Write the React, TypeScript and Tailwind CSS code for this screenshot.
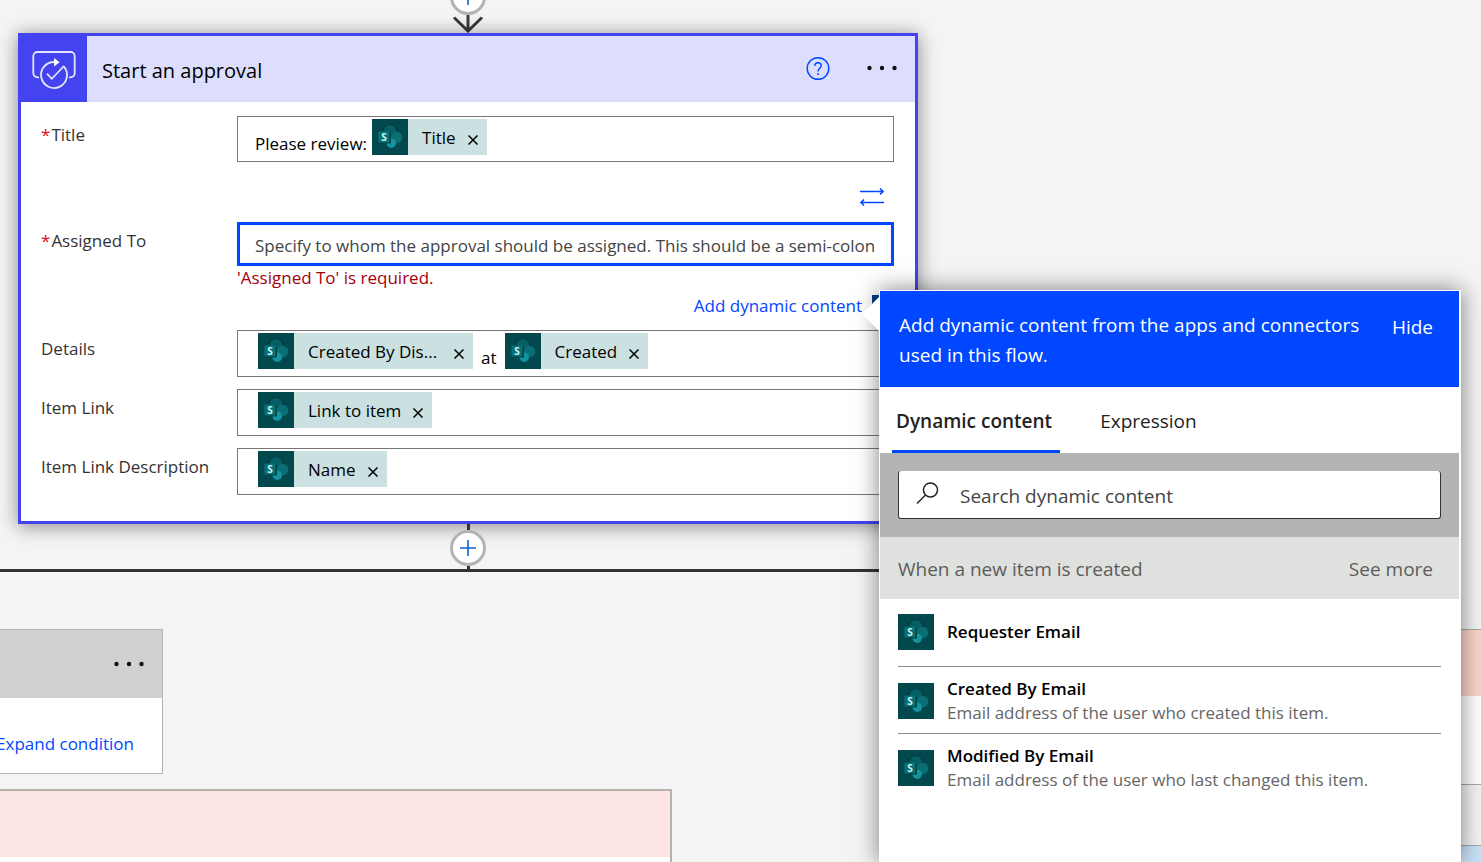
import { useState } from 'react';

interface DynamicItem {
  name: string;
  description?: string;
}

const dynamicItems: DynamicItem[] = [
  { name: 'Requester Email' },
  { name: 'Created By Email', description: 'Email address of the user who created this item.' },
  { name: 'Modified By Email', description: 'Email address of the user who last changed this item.' },
];

function SharePointIcon() {
  return (
    <svg viewBox="0 0 36 36" className="w-9 h-9 shrink-0 bg-[#03484c]" aria-hidden="true">
      <circle cx="18" cy="14" r="9" fill="#023f43" />
      <circle cx="18" cy="12.5" r="6.5" fill="#045e63" />
      <circle cx="24.5" cy="18.5" r="5.8" fill="#0a6f75" />
      <circle cx="19.2" cy="24.2" r="4.8" fill="#1493a0" />
      <rect x="8" y="13.5" width="11" height="11" rx="1" fill="#023f43" />
      <rect x="6.5" y="12.5" width="11" height="11" rx="1" fill="#047379" />
      <text x="12" y="21.6" textAnchor="middle" fontSize="10" fontWeight="700" fill="#d5eeee">S</text>
    </svg>
  );
}

function ApprovalIcon() {
  return (
    <svg viewBox="0 0 66 66" className="w-[66px] h-[66px] shrink-0" fill="none" stroke="#e4e4ff" strokeWidth="1.8" aria-hidden="true">
      <path d="M18 41.3h-1.5a4.2 4.2 0 0 1-4.2-4.2V20.2a4.2 4.2 0 0 1 4.2-4.2h33a4.2 4.2 0 0 1 4.2 4.2v16.9a4.2 4.2 0 0 1-4.2 4.2H48" />
      <path d="M33.5 26a13 13 0 1 0 9.3 4.4" />
      <path d="M26 37.600l4.8 5.2L43 30" />
      <path d="M33 22v8.600l5.600-4.300z" fill="#fff" stroke="none" />
    </svg>
  );
}

function MoreDots() {
  return (
    <svg viewBox="0 0 30 6" className="w-[30px] h-[6px]" fill="#111" aria-hidden="true">
      <circle cx="2.5" cy="3" r="2.2" />
      <circle cx="15" cy="3" r="2.2" />
      <circle cx="27.5" cy="3" r="2.2" />
    </svg>
  );
}

function InsertStepButton() {
  return (
    <button
      type="button"
      aria-label="Insert a new step"
      className="w-9 h-9 shrink-0 rounded-full border-3 border-[#b3b3b3] bg-white flex items-center justify-center"
    >
      <svg viewBox="0 0 16 16" className="w-4 h-4" stroke="#0b62d6" strokeWidth="1.6" aria-hidden="true">
        <path d="M8 0v16M0 8h16" />
      </svg>
    </button>
  );
}

function Token({ label, wide }: { label: string; wide?: boolean }) {
  return (
    <span className="flex h-9 shrink-0 items-center bg-[#cbe0e0] text-black">
      <SharePointIcon />
      <span className={wide ? 'ml-[14px] mt-px w-[146px]' : 'ml-[14px] mt-px mr-3'}>{label}</span>
      <button type="button" aria-label={`Remove ${label}`} className="mr-[9px] mt-[6px]">
        <svg viewBox="0 0 10 10" className="w-[10px] h-[10px]" stroke="#000" strokeWidth="1.5" aria-hidden="true">
          <path d="M.5 .5l9 9M9.5 .5l-9 9" />
        </svg>
      </button>
    </span>
  );
}

interface FieldProps {
  id: string;
  label: string;
  required?: boolean;
  children: React.ReactNode;
}

function Field({ id, label, required, children }: FieldProps) {
  return (
    <div className="flex">
      <label htmlFor={id} className="w-[196px] shrink-0 pt-[7px] text-[#333]">
        {required && <span className="mr-px text-[#e00b1c]">*</span>}
        {label}
      </label>
      <div className="flex-1 min-w-0">{children}</div>
    </div>
  );
}

function TokenBox({ id, children }: { id: string; children: React.ReactNode }) {
  return (
    <div className="flex h-[47px] items-start border border-[#767676] bg-white pl-5 pt-[2px]">
      {children}
      <input id={id} type="text" className="h-9 min-w-0 flex-1 bg-transparent pl-1 outline-none" />
    </div>
  );
}

function ApprovalCard() {
  return (
    <section className="w-full border-3 border-[#4343f0] bg-white text-[17px] leading-6 shadow-[0_2px_18px_rgba(0,0,0,0.45)]">
      <header className="flex h-[66px] items-center bg-[#dddefd]">
        <div className="bg-[#4343f0]">
          <ApprovalIcon />
        </div>
        <h2 className="ml-[15px] flex-1 pt-[3px] text-xl text-black">Start an approval</h2>
        <button type="button" aria-label="Help" className="mr-[19px]">
          <svg viewBox="0 0 24 24" className="w-6 h-6" fill="none" stroke="#0047ff" strokeWidth="1.4" aria-hidden="true">
            <circle cx="12" cy="11.5" r="10.8" />
            <path d="M8.8 8.9c0-2 1.400-3.200 3.200-3.200s3.200 1.100 3.200 2.900c0 2.700-3.100 2.900-3.100 5.300v.6" />
            <path d="M12.1 16.300v1.800" strokeWidth="1.7" />
          </svg>
        </button>
        <button
          type="button"
          aria-label="Menu for Start an approval"
          className="flex h-[66px] w-[66px] items-center justify-center pb-[2px]"
        >
          <MoreDots />
        </button>
      </header>

      <div className="pt-[14px] pr-[21px] pb-[26px] pl-5">
        <Field id="title" label="Title" required>
          <div className="flex h-[46px] items-start gap-[5px] border border-[#767676] bg-white pl-[17px] pt-[2px] text-black">
            <span className="pt-[13px]">Please review:</span>
            <Token label="Title" />
            <input id="title" type="text" className="h-9 min-w-0 flex-1 bg-transparent outline-none" />
          </div>
        </Field>

        <div className="flex h-[60px] items-center justify-end pt-[10px] pr-[9px]">
          <button type="button" aria-label="Switch to detail inputs">
            <svg viewBox="0 0 26 20" className="w-[26px] h-5" fill="none" stroke="#0047ff" strokeWidth="1.6" aria-hidden="true">
              <path d="M1 4.500h23M21 1.500L24 4.500l-3 3M25 15.500H2M5 12.500L2 15.500l3 3" />
            </svg>
          </button>
        </div>

        <Field id="assigned" label="Assigned To" required>
          <input
            id="assigned"
            type="text"
            placeholder="Specify to whom the approval should be assigned. This should be a semi-colon separated list of users"
            className="block h-11 w-full border-3 border-[#0047ff] bg-white px-[15px] pt-[2px] outline-none placeholder:text-[#444]"
          />
          <p className="text-[#a4000f]">'Assigned To' is required.</p>
        </Field>
        <div className="mt-1 mb-3 flex items-center justify-end gap-[10px]">
          <button type="button" className="text-[#0047ff]">Add dynamic content</button>
          <span className="h-[22px] w-[22px] bg-[#003a8c]" />
        </div>

        <div className="flex flex-col gap-3">
          <Field id="details" label="Details">
            <TokenBox id="details">
              <Token label="Created By Dis..." wide />
              <span className="px-2 pt-[13px]">at</span>
              <Token label="Created" />
            </TokenBox>
          </Field>
          <Field id="link" label="Item Link">
            <TokenBox id="link">
              <Token label="Link to item" />
            </TokenBox>
          </Field>
          <Field id="link-description" label="Item Link Description">
            <TokenBox id="link-description">
              <Token label="Name" />
            </TokenBox>
          </Field>
        </div>
      </div>
    </section>
  );
}

function DynamicContentPanel() {
  const [tab, setTab] = useState('Dynamic content');

  return (
    <aside className="absolute top-[290px] bottom-0 left-[879px] w-[582px] border-t border-r-2 border-l border-white bg-white shadow-[0_0_22px_rgba(0,0,0,0.5)]">
      <svg
        viewBox="0 0 18 36"
        className="absolute top-[5px] -left-[18px] h-9 w-[18px]"
        aria-hidden="true"
      >
        <path d="M18 0v36L0 18z" fill="#fff" />
      </svg>
      <div className="flex h-24 items-start justify-between bg-[#0047ff] pt-[19px] pr-[26px] pl-[19px] text-[19px] leading-[30px] text-white">
        <p className="w-[470px]">Add dynamic content from the apps and connectors used in this flow.</p>
        <button type="button" className="pt-[2px]">Hide</button>
      </div>

      <div role="tablist" className="flex h-[66px] gap-9 pl-3 text-[19px] text-[#222]">
        {['Dynamic content', 'Expression'].map(name => (
          <button
            key={name}
            type="button"
            role="tab"
            aria-selected={tab === name}
            onClick={() => setTab(name)}
            className={`border-b-3 pt-[6px] pr-2 pl-1 ${
              tab === name ? 'border-[#0047ff] font-semibold' : 'border-transparent'
            }`}
          >
            {name}
          </button>
        ))}
      </div>

      <div className="bg-[#b3b5b2] p-[18px]">
        <div className="flex h-12 items-center rounded-[3px] border border-t-0 border-[#333] bg-white pl-[17px]">
          <svg viewBox="0 0 24 24" className="mb-1 h-6 w-6" fill="none" stroke="#222" strokeWidth="1.5" aria-hidden="true">
            <circle cx="14.500" cy="9" r="7" />
            <path d="M9.500 14L1 22.500" />
          </svg>
          <input
            type="text"
            aria-label="Search dynamic content"
            placeholder="Search dynamic content"
            className="min-w-0 flex-1 pt-[3px] pl-5 text-[19px] outline-none placeholder:text-[#444]"
          />
        </div>
      </div>

      <div className="flex h-[62px] items-center justify-between bg-[#dfe1de] pt-[2px] pr-[26px] pl-[18px] text-[19px] text-[#5c5c5c]">
        <h3>When a new item is created</h3>
        <button type="button">See more</button>
      </div>

      <ul className="px-[18px] text-[17px] leading-6">
        {dynamicItems.map(item => (
          <li key={item.name} className="border-b border-[#8c8c8c] last:border-b-0">
            <button
              type="button"
              className={`flex w-full items-center gap-[13px] text-left ${
                item.description ? 'pt-[10px] pb-2' : 'pt-[15px] pb-4'
              }`}
            >
              <SharePointIcon />
              <span>
                <span className="block font-semibold text-black">{item.name}</span>
                {item.description && <span className="block text-[#666]">{item.description}</span>}
              </span>
            </button>
          </li>
        ))}
      </ul>
    </aside>
  );
}

export default function App() {
  return (
    <main className="relative h-screen overflow-hidden bg-[#f4f4f4] font-['Open_Sans',sans-serif]">
      <div className="ml-[18px] flex w-[900px] flex-col items-center">
        <div className="flex h-[33px] flex-col items-center justify-end">
          <InsertStepButton />
          <svg viewBox="0 0 32 18" className="h-[18px] w-8 shrink-0" fill="none" stroke="#3a3a3a" strokeWidth="3" aria-hidden="true">
            <path d="M16 0v16M2 2.500l14 13.500L30 2.500" />
          </svg>
        </div>
        <ApprovalCard />
        <div className="h-[6px] w-[3px] bg-[#333]" />
        <InsertStepButton />
        <div className="h-[3px] w-[3px] bg-[#333]" />
      </div>
      <div className="mr-12 h-[3px] bg-[#333]" />

      <div className="mt-[57px] flex items-start justify-between">
        <div className="w-[672px]">
          <section className="w-[163px] border border-l-0 border-[#b3b3b3] bg-white">
            <div className="flex h-[68px] items-center justify-end bg-[#d0d1d2] pr-[18px]">
              <button type="button" aria-label="Menu for Condition">
                <MoreDots />
              </button>
            </div>
            <div className="flex h-[75px] items-center justify-end pt-4 pr-7">
              <button type="button" className="text-[17px] leading-6 whitespace-nowrap text-[#0047ff]">
                Expand condition
              </button>
            </div>
          </section>
          <section className="mt-[15px] h-[300px] border-t-2 border-r-2 border-[#b3b3b0] bg-white">
            <div className="h-[66px] bg-[#fde5e4]" />
          </section>
        </div>

        <div className="w-[120px]">
          <section className="border-y border-[#a8a8a8] bg-white">
            <div className="h-[66px] bg-[#fbd5ca]" />
            <div className="h-[88px]" />
          </section>
          <section className="mt-[60px] h-[200px] border-t border-[#a8a8a8] bg-[#c9e2f8]" />
        </div>
      </div>

      <DynamicContentPanel />
    </main>
  );
}
